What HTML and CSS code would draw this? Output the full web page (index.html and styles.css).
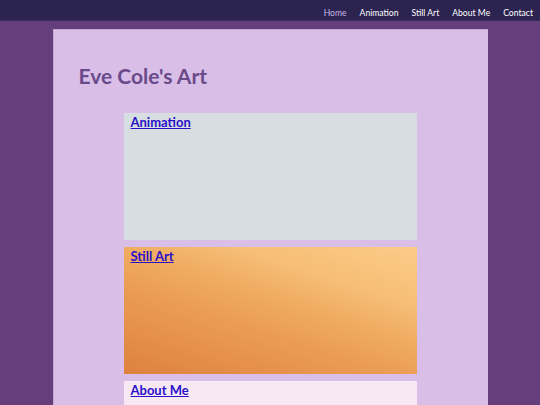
FILE: index.html
```html
<!DOCTYPE html>
<html lang="en">
<head>
    <meta charset="UTF-8">
    <meta name="viewport" content="width=device-width, initial-scale=1.0">
    <title>Eve Cole's Art</title>
    <link rel="stylesheet" href="styles.css">
</head>
<body>
    <nav class="topnav">
        <a href="#" class="active">Home</a>
        <a href="#">Animation</a>
        <a href="#">Still Art</a>
        <a href="#">About Me</a>
        <a href="#">Contact</a>
    </nav>
    <div class="container">
        <h1>Eve Cole's Art</h1>
        <div class="gallery">
            <div class="tile tile-animation"><a href="#">Animation</a></div>
            <div class="tile tile-still"><a href="#">Still Art</a></div>
            <div class="tile tile-about"><a href="#">About Me</a></div>
        </div>
    </div>
</body>
</html>
```

FILE: styles.css
```css
body {
    font-family: Lato, "Open Sans", sans-serif;
    margin: 0;
    padding: 0;
    background: #643f7b;
    height: 405px;
    overflow: hidden;
}
.topnav {
    display: flex;
    justify-content: flex-end;
    align-items: flex-end;
    gap: 13px;
    height: 21px;
    box-sizing: border-box;
    padding: 0 7px 2px 0;
    background: #2b2350;
    border-bottom: 1px solid #3a2a5c;
}
.topnav a {
    color: #fff;
    font-size: 8.6px;
    line-height: 1;
    text-decoration: none;
}
.topnav a.active {
    color: #c9b3e6;
}
.container {
    width: 409px;
    margin: 8px auto 0;
    padding: 33px 0 0 25px;
    min-height: 400px;
    background: #d9bfe8;
    border-top: 1px solid #c5a6da;
    border-left: 1px solid #c5a6da;
}
h1 {
    margin: 0;
    font-size: 21px;
    font-weight: bold;
    color: #6a4a8a;
}
.gallery {
    display: flex;
    flex-direction: column;
    gap: 7px;
    width: 293px;
    margin: 25px 0 0 45px;
}
.tile {
    height: 127px;
    padding: 0 7px;
    box-sizing: border-box;
    line-height: 1;
}
.tile a {
    color: #2a10c8;
    font-size: 13px;
    font-weight: bold;
}
.tile-animation { background: #d7dee1; }
.tile-still {
    background: linear-gradient(18deg, #de8140 0%, #eb9d55 40%, #f0ad63 58%, #f6bd75 72%, #fccc88 100%);
}
.tile-about { background: #f8e8f3; }
```
